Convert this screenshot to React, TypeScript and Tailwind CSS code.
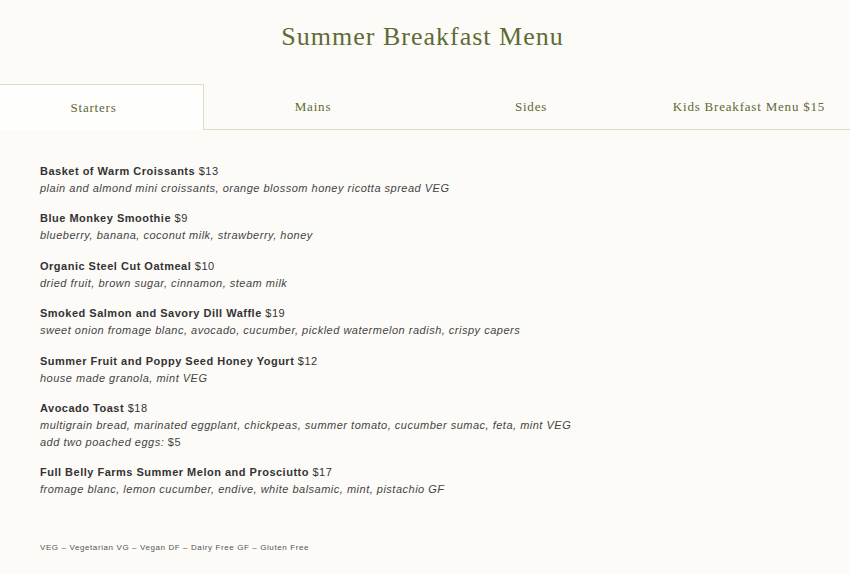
import React from 'react';

interface MenuItem {
  name: string;
  price: string;
  desc: string;
  extra?: { label: string; price: string };
}

const ITEMS: MenuItem[] = [
  { name: 'Basket of Warm Croissants', price: '$13', desc: 'plain and almond mini croissants, orange blossom honey ricotta spread VEG' },
  { name: 'Blue Monkey Smoothie', price: '$9', desc: 'blueberry, banana, coconut milk, strawberry, honey' },
  { name: 'Organic Steel Cut Oatmeal', price: '$10', desc: 'dried fruit, brown sugar, cinnamon, steam milk' },
  { name: 'Smoked Salmon and Savory Dill Waffle', price: '$19', desc: 'sweet onion fromage blanc, avocado, cucumber, pickled watermelon radish, crispy capers' },
  { name: 'Summer Fruit and Poppy Seed Honey Yogurt', price: '$12', desc: 'house made granola, mint VEG' },
  {
    name: 'Avocado Toast',
    price: '$18',
    desc: 'multigrain bread, marinated eggplant, chickpeas, summer tomato, cucumber sumac, feta, mint VEG',
    extra: { label: 'add two poached eggs:', price: '$5' },
  },
  { name: 'Full Belly Farms Summer Melon and Prosciutto', price: '$17', desc: 'fromage blanc, lemon cucumber, endive, white balsamic, mint, pistachio GF' },
];

const TABS = ['Mains', 'Sides', 'Kids Breakfast Menu $15'];

const serif = "font-['Liberation_Serif','Times_New_Roman',serif]";
const sans = "font-['Liberation_Sans',Arial,sans-serif]";

export default function App() {
  return (
    <div className="min-h-[574px] w-[850px] overflow-hidden bg-[#fcfbf8]">
      <header className="flex h-[84px] items-center justify-center pb-[10px] pr-[5px]">
        <h1 className={`${serif} text-[26px] leading-none tracking-[1px] text-[#5f6a34]`}>
          Summer Breakfast Menu
        </h1>
      </header>

      <nav className="flex h-[46px]">
        <div className={`${serif} flex w-[204px] shrink-0 items-center justify-center border-t border-r border-[#e0dbc6] bg-[#fefefd] pr-[16px] text-[13px] tracking-[0.8px] text-[#5f6a34]`}>
          Starters
        </div>
        {TABS.map((tab) => (
          <div
            key={tab}
            className={`${serif} flex w-[218px] shrink-0 items-center justify-center border-b border-[#e0dbc6] text-[13px] tracking-[0.8px] text-[#5f6a34]`}
          >
            {tab}
          </div>
        ))}
      </nav>

      <main className={`${sans} flex flex-col gap-[13.4px] px-[40px] pt-[33px]`}>
        {ITEMS.map((item) => (
          <div key={item.name} className="text-[11px] leading-[17px] tracking-[0.5px] text-[#333]">
            <p>
              <span className="font-bold">{item.name}</span> {item.price}
            </p>
            <p className="italic text-[#444]">{item.desc}</p>
            {item.extra && (
              <p className="text-[#444]">
                <span className="italic">{item.extra.label}</span> {item.extra.price}
              </p>
            )}
          </div>
        ))}
      </main>

      <footer className={`${sans} px-[40px] pt-[44px] text-[8px] tracking-[0.6px] text-[#555]`}>
        VEG – Vegetarian VG – Vegan DF – Dairy Free GF – Gluten Free
      </footer>
    </div>
  );
}
